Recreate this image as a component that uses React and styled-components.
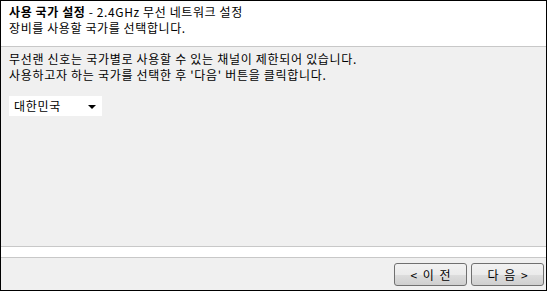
import React from "react";
import styled, { createGlobalStyle } from "styled-components";

const GlobalStyle = createGlobalStyle`
  body {
    margin: 0;
    font-family: "Noto Sans CJK KR", "Noto Sans", sans-serif;
    font-size: 12px;
    color: #000;
  }
`;

const Wizard = styled.div`
  width: 547px;
  height: 291px;
  box-sizing: border-box;
  border: 1px solid #000;
  background-color: #f0f0f0;
  display: flex;
  flex-direction: column;
`;

const Header = styled.div`
  height: 46px;
  box-sizing: border-box;
  padding: 3px 8px 0;
  background-color: #fff;
  border-bottom: 1px solid #c8c8c8;
  line-height: 16px;
  letter-spacing: 0.6px;
`;

const Title = styled.div`
  b {
    font-weight: 700;
  }
`;

const Body = styled.div`
  flex: 1;
  padding: 4px 8px 0;
  line-height: 16px;
  letter-spacing: 0.7px;
`;

const Message = styled.p`
  margin: 0;
`;

const CountrySelect = styled.div`
  margin-top: 13px;
  width: 93px;
  height: 20px;
  box-sizing: border-box;
  background-color: #fff;
  display: flex;
  align-items: center;
  justify-content: space-between;
  padding: 0 6px 0 5px;
`;

const Arrow = styled.span`
  width: 0;
  height: 0;
  border-left: 4px solid transparent;
  border-right: 4px solid transparent;
  border-top: 4px solid #000;
  margin-top: 2px;
`;

const Strip = styled.div`
  height: 10px;
  background-color: #fff;
  border-top: 1px solid #c8c8c8;
  border-bottom: 1px solid #c8c8c8;
`;

const Footer = styled.div`
  height: 32px;
  box-sizing: border-box;
  display: flex;
  justify-content: flex-end;
  gap: 4px;
  padding: 5px 2px 0 0;
`;

const Button = styled.button`
  width: 73px;
  height: 23px;
  box-sizing: border-box;
  border: 1px solid #707070;
  border-radius: 3px;
  background: linear-gradient(#f2f2f2 0%, #ebebeb 50%, #dddddd 51%, #cfcfcf 100%);
  font-family: inherit;
  font-size: 12px;
  color: #000;
  padding: 0;
  word-spacing: 3px;
`;

const App = () => {
  return (
    <>
      <GlobalStyle />
      <Wizard>
        <Header>
          <Title>
            <b>사용 국가 설정</b> - 2.4GHz 무선 네트워크 설정
          </Title>
          <div>장비를 사용할 국가를 선택합니다.</div>
        </Header>
        <Body>
          <Message>무선랜 신호는 국가별로 사용할 수 있는 채널이 제한되어 있습니다.</Message>
          <Message>사용하고자 하는 국가를 선택한 후 '다음' 버튼을 클릭합니다.</Message>
          <CountrySelect>
            대한민국
            <Arrow />
          </CountrySelect>
        </Body>
        <Strip />
        <Footer>
          <Button>&lt; 이 전</Button>
          <Button>다 음 &gt;</Button>
        </Footer>
      </Wizard>
    </>
  );
};

export default App;
